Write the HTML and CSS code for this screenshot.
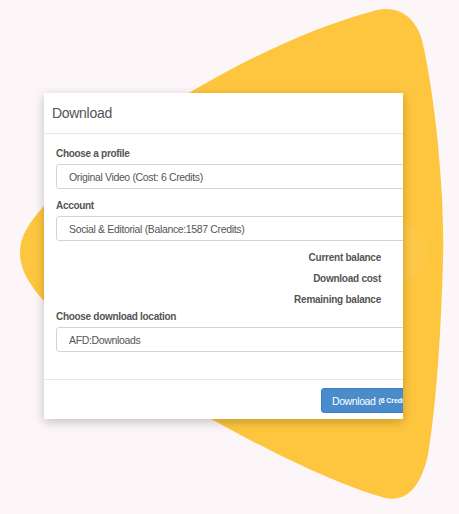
FILE: index.html
```html
<!DOCTYPE html>
<html lang="en">
<head>
<meta charset="utf-8">
<title>Download</title>
<link rel="stylesheet" href="styles.css">
</head>
<body>
<svg class="blob" width="459" height="514" viewBox="0 0 459 514" aria-hidden="true">
  <path fill="#fec63e" d="M20 253 C20 235 30 222 43 207 C100 140 250 45 370 12 C395 3 415 15 422 40 C436 100 445 200 443 260 C441 330 437 400 428 455 C420 490 405 502 385 498 C300 475 110 370 43 300 C30 285 20 270 20 253 Z"/>
  <circle cx="402" cy="252" r="27" fill="#ffffff" opacity="0.05"/>
</svg>
<div class="stage">
  <div class="card">
    <div class="modal">
      <div class="modal-header">
        <h4 class="modal-title">Download</h4>
      </div>
      <div class="modal-body">
        <div class="field-label">Choose a profile</div>
        <div class="select">Original Video (Cost: 6 Credits)</div>
        <div class="field-label gap">Account</div>
        <div class="select">Social &amp; Editorial (Balance:1587 Credits)</div>
        <div class="stats">
          <div class="stat">Current balance</div>
          <div class="stat">Download cost</div>
          <div class="stat">Remaining balance</div>
        </div>
        <div class="field-label">Choose download location</div>
        <div class="select">AFD:Downloads</div>
      </div>
      <div class="modal-footer">
        <button class="btn">Download <small>(6 Credits)</small></button>
      </div>
    </div>
  </div>
</div>
</body>
</html>
```
FILE: styles.css
```css
html, body {
  margin: 0;
  padding: 0;
}
body {
  width: 459px;
  height: 514px;
  background: #fdf6f8;
  font-family: "Liberation Sans", Arial, sans-serif;
  position: relative;
  overflow: hidden;
}
.blob {
  position: absolute;
  left: 0;
  top: 0;
}
.stage {
  padding: 93px 0 0 44px;
}
.card {
  position: relative;
  z-index: 1;
  width: 359px;
  height: 326px;
  overflow: hidden;
  background: #fff;
  box-shadow: 0 3px 10px rgba(0, 0, 0, 0.22);
}
.modal {
  width: 470px;
}
.modal-header {
  height: 40px;
  border-bottom: 1px solid #e8e8e8;
  padding-left: 8px;
  display: flex;
  align-items: center;
}
.modal-title {
  margin: 0;
  font-size: 14px;
  font-weight: normal;
  letter-spacing: -0.3px;
  color: #555;
}
.modal-body {
  padding: 13px 12px 27px 12px;
}
.field-label {
  font-size: 10px;
  line-height: 14px;
  font-weight: bold;
  letter-spacing: -0.3px;
  color: #555;
  margin-bottom: 3px;
}
.field-label.gap {
  margin-top: 10px;
}
.select {
  height: 23px;
  border: 1px solid #d4d4d4;
  border-radius: 3px;
  padding-left: 12px;
  display: flex;
  align-items: center;
  font-size: 10.5px;
  letter-spacing: -0.35px;
  color: #555;
}
.stats {
  margin-top: 6px;
  width: 325px;
}
.stat {
  text-align: right;
  font-size: 10px;
  line-height: 21px;
  font-weight: bold;
  letter-spacing: -0.25px;
  color: #555;
}
.modal-footer {
  border-top: 1px solid #e8e8e8;
  padding: 8px 0 6px 277px;
}
.btn {
  display: flex;
  align-items: center;
  height: 25px;
  padding: 0 10px;
  border: 1px solid #3d80c0;
  border-radius: 3px;
  background: #4a8ccb;
  color: #fff;
  font-family: "Liberation Sans", Arial, sans-serif;
  font-size: 10.5px;
  letter-spacing: -0.4px;
  white-space: nowrap;
}
.btn small {
  font-size: 7px;
  font-weight: bold;
  margin-left: 3px;
  letter-spacing: -0.1px;
}
```
